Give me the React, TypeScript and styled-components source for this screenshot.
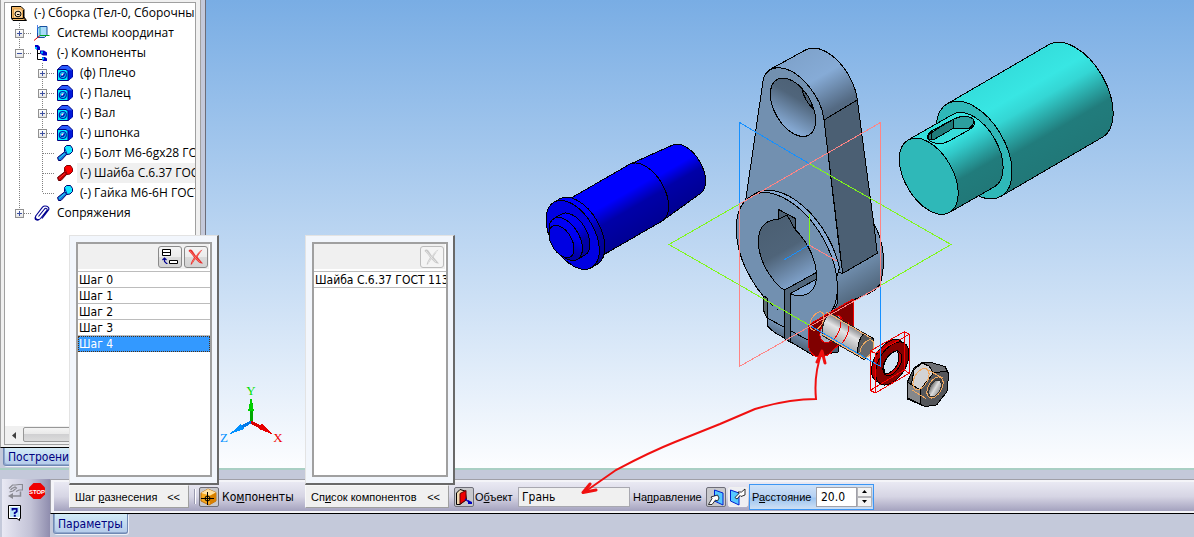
import React from 'react';
import styled, { createGlobalStyle, css } from 'styled-components';

const UI = '"Open Sans", "Noto Sans", sans-serif';
const LIST = '"DejaVu Sans Condensed", "DejaVu Sans", sans-serif';
const LABEL = '"Liberation Sans", Arial, sans-serif';

const Global = createGlobalStyle`
  *, *::before, *::after { box-sizing: border-box; }
  body { margin: 0; background: #c4c9da; overflow: hidden; font-family: ${UI}; font-size: 12px; color: #000; }
  button, input { font: inherit; color: inherit; margin: 0; }
`;

const Shell = styled.div`
  position: relative;
  display: flex;
  flex-direction: column;
  height: 100vh;
`;

const Workspace = styled.div`
  flex: 1;
  min-height: 0;
  display: flex;
  border-bottom: 2px solid #a9cfc4;
`;

/* ---------- model tree ---------- */

const Dock = styled.aside`
  flex: none;
  width: 206px;
  display: flex;
  flex-direction: column;
  background: #c4c9da;
  border-right: 1px solid #6c6c78;
`;

const DockFrame = styled.div`
  flex: 1;
  min-height: 0;
  display: flex;
  margin-right: 4px;
  padding: 2px 4px 2px 3px;
  background: #f0f0f0;
  border-left: 1px solid #a0a0a0;
  border-right: 1px solid #a0a0a0;
  border-bottom: 1px solid #000;
`;

const TreeBox = styled.div`
  flex: 1;
  min-width: 0;
  display: flex;
  flex-direction: column;
  background: #fff;
  border: 1px solid #a0a0a0;
`;

const TreeList = styled.ul`
  flex: 1;
  min-height: 0;
  overflow: hidden;
  margin: 0;
  padding: 0 0 0 3px;
  list-style: none;
`;

const TreeRow = styled.li`
  display: flex;
  align-items: center;
  height: 20px;
  white-space: nowrap;
`;

const dotsV = 'repeating-linear-gradient(to bottom, #808080 0 1px, transparent 1px 2px)';
const dotsH = 'repeating-linear-gradient(to right, #808080 0 1px, transparent 1px 2px)';

const Guide = styled.span<{ $up?: boolean; $down?: boolean; $right?: boolean }>`
  flex: none;
  width: 23px;
  height: 20px;
  display: flex;
  align-items: center;
  justify-content: center;
  background-repeat: no-repeat;
  background-image: ${dotsV}, ${dotsV}, ${dotsH};
  background-position: 11px 0, 11px 10px, 12px 10px;
  background-size: 1px ${p => (p.$up ? 10 : 0)}px, 1px ${p => (p.$down ? 10 : 0)}px, ${p => (p.$right ? 11 : 0)}px 1px;
`;

const Toggle = styled.button`
  width: 9px;
  height: 9px;
  padding: 0;
  display: flex;
  border: 1px solid #919191;
  background: linear-gradient(#fff, #e4e4e4);
`;

const IconCell = styled.span`
  flex: none;
  width: 23px;
  height: 20px;
  padding-right: 1px;
  display: flex;
  align-items: center;
  justify-content: center;
`;

const Caption = styled.span<{ $active?: boolean }>`
  flex: 1;
  height: 20px;
  padding-left: 3px;
  line-height: 20px;
  background: ${p => (p.$active ? '#f0f0f0' : 'transparent')};
`;

const ScrollBar = styled.div`
  flex: none;
  display: flex;
  height: 18px;
  background: #f0f0f0;
`;

const ScrollArrow = styled.button`
  width: 18px;
  padding: 0 0 2px;
  border: 0;
  background: none;
`;

const ScrollThumb = styled.div`
  width: 100px;
  height: 15px;
  margin-top: 1px;
  display: flex;
  align-items: center;
  justify-content: center;
  gap: 2px;
  border: 1px solid #979797;
  border-radius: 2px;
  background: linear-gradient(#f4f4f4, #e8e8e8 50%, #d0d0d2 50%, #dcdcdc);
`;

const Grip = styled.i`
  width: 1px;
  height: 7px;
  background: #555;
`;

const TabStrip = styled.div`
  flex: none;
  height: 20px;
  display: flex;
  padding-left: 3px;
`;

const Tab = styled.button`
  height: 18px;
  padding: 0 4px;
  border: 1px solid #7089b4;
  border-top: 0;
  border-radius: 0 0 3px 3px;
  box-shadow: inset 1px -1px 0 #8ea6cc, 1px 1px 0 #eceff6;
  background: linear-gradient(#d2eaf6, #b4cbea);
  color: #000080;
  font-family: ${LIST};
  font-size: 12px;
  line-height: 18px;
  text-align: left;
`;

/* ---------- viewport ---------- */

const Viewport = styled.main`
  flex: 1;
  min-width: 0;
  overflow: hidden;
  background: linear-gradient(#79ade4, #fcfdff);
`;

const Scene = styled.svg`
  display: block;
  width: 988px;
  height: 468px;
`;

const Markup = styled.svg`
  position: absolute;
  left: 0;
  top: 0;
  width: 1194px;
  height: 537px;
  pointer-events: none;
  z-index: 4;
`;

/* ---------- property panel ---------- */

const Panel = styled.footer`
  flex: none;
  display: flex;
  height: 67px;
  padding-top: 9px;
`;

const SideTools = styled.div`
  flex: none;
  width: 48px;
  margin-left: 2px;
  padding: 1px 0 0 3px;
  display: grid;
  grid-template-columns: 20px 20px;
  grid-auto-rows: 22px;
  column-gap: 2px;
  align-content: start;
  background: linear-gradient(to right, #e9e9f4, #c2c2d6 60%, #8f8dae);
`;

const SideButton = styled.button`
  padding: 0;
  border: 0;
  background: none;
  display: flex;
  align-items: center;
  justify-content: center;
`;

const PanelBody = styled.div`
  flex: 1;
  min-width: 0;
`;

const PropertyBar = styled.div`
  display: flex;
  align-items: center;
  height: 35px;
  padding-left: 18px;
  border-left: 1px solid #a0a0a8;
  border-top: 1px solid #a0a0a8;
  border-bottom: 1px solid #000;
  box-shadow: inset 3px 2px 0 #f4f4f8, inset 0 -2px 0 #f4f4f8;
  background: linear-gradient(#ececf5, #d6d5e4 50%, #9d9bb9);
`;

const DropField = styled.div<{ $width: number }>`
  position: relative;
  flex: none;
  width: ${p => p.$width}px;
  margin-right: 5px;
`;

const DropButton = styled.button`
  width: 100%;
  height: 23px;
  padding: 0 8px 0 5px;
  display: flex;
  align-items: center;
  justify-content: space-between;
  border: 1px solid #a0a0a0;
  border-top-color: #f8f8f8;
  border-left-color: #f8f8f8;
  background: #f0f0f0;
  font-family: ${LABEL};
  font-size: 11px;
  white-space: nowrap;
`;

const Popup = styled.section<{ $width: number }>`
  position: absolute;
  left: 0;
  bottom: 100%;
  z-index: 3;
  width: ${p => p.$width}px;
  height: 250px;
  padding: 6px 5px 6px 6px;
  display: flex;
  border: 1px solid #e3e3e3;
  border-right: 2px solid #696969;
  border-bottom: 2px solid #696969;
  background: #f2f6fc;
`;

const ListBox = styled.div`
  flex: 1;
  min-width: 0;
  display: flex;
  flex-direction: column;
  border: 2px solid #a0a0a0;
  background: #fff;
`;

const ListTools = styled.div`
  flex: none;
  height: 27px;
  padding: 2px 1px 0;
  display: flex;
  justify-content: flex-end;
  gap: 2px;
  border: 1px solid #fff;
  border-width: 0 1px 2px 0;
  background: #f0f0f0;
`;

const ToolButton = styled.button`
  width: 24px;
  height: 22px;
  padding: 0;
  display: flex;
  align-items: center;
  justify-content: center;
  border: 1px solid #8a8a8a;
  border-radius: 3px;
  background: linear-gradient(#f4f4f4, #ececec 50%, #dcdcdc 50%, #d2d2d2);
  &:disabled {
    border-color: #bcbcbc;
    background: #f4f4f4;
  }
`;

const Steps = styled.ul`
  margin: 0;
  padding: 0;
  list-style: none;
  border-top: 1px solid #bcbcbc;
`;

const Step = styled.li<{ $selected?: boolean }>`
  height: 16px;
  padding-left: 1px;
  overflow: hidden;
  white-space: nowrap;
  font-family: ${LIST};
  font-size: 12px;
  line-height: 16px;
  border-bottom: 1px solid #bcbcbc;
  ${p =>
    p.$selected &&
    css`
      color: #fff;
      background: #3399ff;
      border-bottom: 0;
      outline: 1px dotted #503010;
      outline-offset: -1px;
    `}
`;

const Divider = styled.span`
  flex: none;
  width: 2px;
  height: 15px;
  margin-right: 3px;
  background: linear-gradient(to right, #9a9ab0 50%, #fff 50%);
`;

const ModeButton = styled.button<{ $pressed?: boolean }>`
  flex: none;
  width: 20px;
  height: 20px;
  padding: 0;
  display: flex;
  align-items: center;
  justify-content: center;
  border: 1px solid ${p => (p.$pressed ? '#6e6e78' : '#f0f0f0')};
  border-radius: 2px;
  background: ${p => (p.$pressed ? '#c8c8cc' : '#eeeef2')};
  & + & { margin-left: 2px; }
`;

const FieldLabel = styled.label<{ $width: number; $inset?: number; $wide?: boolean }>`
  flex: none;
  width: ${p => p.$width}px;
  padding-left: ${p => p.$inset ?? 0}px;
  white-space: nowrap;
  font-family: ${p => (p.$wide ? LIST : LABEL)};
  font-size: ${p => (p.$wide ? 12 : 11)}px;
`;

const ObjectInput = styled.input`
  flex: none;
  width: 112px;
  height: 20px;
  padding: 0 3px;
  border: 1px solid #a8a8b0;
  border-radius: 0;
  background: #f0f0f0;
  font-family: ${LIST};
  font-size: 12px;
`;

const Distance = styled.div`
  flex: none;
  display: flex;
  align-items: center;
  height: 26px;
  margin-left: 1px;
  padding: 0 1px 0 2px;
  border: 1px solid #3c96f4;
  background: linear-gradient(#cfe2f8, #b4d0f2 50%, #9cc4f0 55%, #cfe0f4);
`;

const DistanceInput = styled.input`
  width: 41px;
  height: 20px;
  padding: 0 4px;
  border: 1px solid #a0a0a8;
  border-radius: 0;
  background: #fff;
  font-family: ${LIST};
  font-size: 12px;
`;

const Spin = styled.div`
  display: flex;
  flex-direction: column;
  width: 15px;
  height: 20px;
`;

const SpinButton = styled.button`
  flex: 1;
  padding: 0;
  display: flex;
  align-items: center;
  justify-content: center;
  border: 1px solid #b4b4b8;
  background: #f4f4f4;
`;

const BottomTabs = styled.div`
  display: flex;
  padding-left: 3px;
`;

const BottomTab = styled(Tab)`
  height: 20px;
`;

/* ---------- icons ---------- */

const Svg16 = ({ children, size = 16 }: { children: React.ReactNode; size?: number }) => (
  <svg width={size} height={size} viewBox="0 0 16 16" aria-hidden="true">{children}</svg>
);

const AssemblyIcon = () => (
  <Svg16>
    <path d="M.5 1.500h9.500l3 3v7.500l2.500 3.500H2l-1.500-2z" fill="#f5b968" stroke="#000" />
    <path d="M2.500 4h7l2 2v7h-9z" fill="#ffd9a0" stroke="#c88830" strokeWidth=".7" />
    <ellipse cx="7" cy="9" rx="3" ry="2.800" fill="#ffe8c8" stroke="#000" />
    <path d="M6 9.500h2.500" stroke="#000" />
    <path d="M1 13.500H12.500M12.500 5v8l2 2" fill="none" stroke="#000" />
  </Svg16>
);

const CoordIcon = () => (
  <Svg16>
    <path d="M3.500 3.500 6 1.500h7v8.500l-2.500 2.500H3.500z" fill="#a8dcf8" stroke="#1850a0" />
    <path d="M6 2v8" stroke="#20a0a0" />
    <path d="M6 10.500H15.500" stroke="#00a020" />
    <path d="M0 15.500 6 10.500" stroke="#e00000" />
    <path d="M3.500 0v8" stroke="#2060e0" strokeWidth=".8" />
  </Svg16>
);

const ComponentsIcon = () => (
  <Svg16>
    <path d="M3.500 5v9.500H8M3.500 8.500H6" fill="none" stroke="#000" />
    <path d="M1 0h3l2 2v3H3L1 3z" fill="#0000c8" /><path d="M1 2h2v2H1z" fill="#00c8ff" />
    <path d="M6 5.500h4l3 2v3H9l-3-2z" fill="#0000c8" /><path d="M7 6.500h2v2H7z" fill="#00c8ff" />
    <path d="M8 12h3l2 1.500V16H9l-1-1.500z" fill="#0000c8" /><path d="M8 12.500h2v2H8z" fill="#00c8ff" />
  </Svg16>
);

const PartIcon = () => (
  <Svg16>
    <path d="M.5 4.500 5 .5h6l4.500 4.500v7L11 15.500 10 5z" fill="#2a5cff" stroke="#000080" />
    <path d="M10.500 5 15.500 5.500V12L11 15.500z" fill="#0018d8" />
    <path d="M.5 4.500h8.500l2 2v9H.5z" fill="#00f0ff" stroke="#000080" />
    <circle cx="5.800" cy="10" r="3.500" fill="#00e0ff" stroke="#0018b0" strokeWidth="1.200" />
    <path d="M3.500 10.500A3 3 0 0 1 8 8.500 3 3 0 0 1 4 12z" fill="#0018b0" />
    <path d="M4.200 10A2 2 0 0 1 7 8.500L5 11z" fill="#fff" />
  </Svg16>
);

const BoltIcon = ({ red }: { red?: boolean }) => (
  <Svg16>
    <path d="M.5 12.500 8 6.500l2.500 2L4 15.500H1.500z" fill={red ? '#c80000' : '#1478d8'} stroke={red ? '#600000' : '#000070'} />
    <path d="M2 13.500 8.500 8" stroke={red ? '#ff3030' : '#20e0ff'} />
    <path d="M7.500 2.500 9.500.5h4l2 3v3l-2.500 2.500L10 9.500 7.500 6.500z" fill={red ? '#ff0000' : '#10e8ff'} stroke={red ? '#800000' : '#000070'} />
    <path d="M7.500 3 10 8.500" stroke={red ? '#a00000' : '#0030b0'} />
  </Svg16>
);

const ClipIcon = () => (
  <Svg16>
    <path d="M4.500 11.500 10.500 4c1.500-1.600 3.500 0 2.300 1.600L6.500 13.500c-2.300 2.600-6.600 0-4.400-3L8.500 2.200C10.500-.3 16 1.600 14.700 4.700L8 13.500M2 10.500 1 13c0 2.500 3 2.500 4 1.500" fill="none" stroke="#000090" strokeWidth="1.100" />
  </Svg16>
);

const StepsIcon = () => (
  <svg width="18" height="18" viewBox="0 0 18 18" aria-hidden="true">
    <path d="M1.500 1.500h8v6h-8zM1.500 4.500h8M8.500 12.500h8v3h-8z" fill="#fff" stroke="#000" />
    <path d="M3.500 10v3.500l2 2h1M1.500 12l2-2 2 2" fill="none" stroke="#000090" strokeWidth="1.200" />
  </svg>
);

const CrossIcon = ({ color, light }: { color: string; light: string }) => (
  <svg width="18" height="18" viewBox="0 0 18 18" aria-hidden="true">
    <path d="M1.500 3C3 .5 5 1.500 6 3.500l3 4.500C11 5 13 2.500 15.500 1.500c-1.500 2-3.500 4.500-5 7.500l5.500 6.500c-2.500.5-4.500-1-7.500-4.500-1.500 2-3 4.500-4.500 6-1-1.500 1.500-5 3-7.500C5.500 7.500 3.500 4.500 1.500 3z" fill={color} />
    <path d="M3 3c3 3 5 7 10 11M14 3C11 6 7 11 5 15" fill="none" stroke={light} strokeWidth=".8" />
  </svg>
);

const HandIcon = () => (
  <Svg16>
    <path d="M2 5.500 5.500 2h3L12 1.500h3.500V7H12L9 8.500M5 5.500l3-1.500 1.500 1L6 8l-3.500 1M3.500 7l2-2" fill="none" stroke="#8a8a92" strokeWidth="1.200" />
    <path d="M13.500 8.500v4.500H5" fill="none" stroke="#8a8a92" strokeWidth="1.500" />
    <path d="M1 13l5-3v6z" fill="#8a8a92" />
  </Svg16>
);

const StopIcon = () => (
  <svg width="18" height="18" viewBox="0 0 18 18" aria-hidden="true">
    <path d="M5.500 1h7L17 5.500v7L12.500 17h-7L1 12.500v-7z" fill="#f00000" />
    <text x="9" y="11.500" textAnchor="middle" fontFamily="Liberation Sans" fontWeight="700" fontSize="6" fill="#fff">STOP</text>
  </svg>
);

const HelpIcon = () => (
  <svg width="14" height="16" viewBox="0 0 14 16" aria-hidden="true">
    <path d="M.5 .5h12v13H11.500v2L9 13.500H.5z" fill="#fff" stroke="#000" />
    <path d="M2 2h9.500v10H2z" fill="#bfe6f8" />
    <path d="M4.500 5.500V3.900h4.200v2.600L6.700 8v1.200M5.800 10.800h2" fill="none" stroke="#000090" strokeWidth="1.800" />
  </svg>
);

const BoxIcon = () => (
  <svg width="18" height="18" viewBox="0 0 18 18" aria-hidden="true">
    <path d="M1 5 8 1l8 3.500v8.500L9 17 1 13z" fill="#f7a81c" stroke="#b06000" strokeWidth=".8" />
    <path d="M1 5 8 1l8 3.500-6 3z" fill="#ffe0a0" />
    <path d="M10 8 16 4.500V13l-6 3.500z" fill="#d88000" />
    <path d="M1 10.500h13M7.500 4v13" stroke="#000" />
    <circle cx="7.500" cy="10.500" r="2.500" fill="none" stroke="#000" />
  </svg>
);

const ObjectIcon = () => (
  <svg width="18" height="18" viewBox="0 0 18 18" aria-hidden="true">
    <path d="M1.500 5 5 1.500 10 3l1.500 8.500L5 16.500H1.500z" fill="#f0d8b0" stroke="#000" />
    <path d="M5 5.500 11 2.500V12l-6 4z" fill="#f00000" stroke="#600000" />
    <path d="M10 11 14 14" stroke="#0000c0" strokeWidth="1.200" />
    <path d="M13 12l4 2v2h-4z" fill="#0000c0" />
  </svg>
);

const DirectionIcon = ({ mirrored }: { mirrored?: boolean }) => (
  <svg width="18" height="18" viewBox="0 0 18 18" aria-hidden="true">
    {mirrored ? (
      <>
        <path d="M1.500 2 10 5v12L1.500 13z" fill="#55c8ff" stroke="#0020d0" />
        <path d="M6 9.500 10 5.500 9 4h3.500L16 1v6l-4 1.500-1-1L8 11z" fill="#fff" stroke="#000" strokeWidth=".8" />
      </>
    ) : (
      <>
        <path d="M7.500 2 16 5v12l-8.500-4z" fill="#55c8ff" stroke="#0020d0" />
        <path d="M1.500 16.500 5 10.500 4 9l6.500-2L12 10l-1.500 3-2-1-3.500 4.500z" fill="#fff" stroke="#000" strokeWidth=".8" />
      </>
    )}
  </svg>
);

/* ---------- 3D drawing ---------- */

type Disc = { x: number; y: number; r: number };

/* Outline of a turned body between two isometric circles whose axis rises to the right. */
const bodyPath = (a: Disc, b: Disc) => {
  const dx = 0.5, dy = 0.866, k = 0.577;
  return (
    `M${a.x - dx * a.r} ${a.y - dy * a.r}L${b.x - dx * b.r} ${b.y - dy * b.r}` +
    `A${b.r} ${b.r * k} 60 0 1 ${b.x + dx * b.r} ${b.y + dy * b.r}` +
    `L${a.x + dx * a.r} ${a.y + dy * a.r}` +
    `A${a.r} ${a.r * k} 60 0 1 ${a.x - dx * a.r} ${a.y - dy * a.r}Z`
  );
};

const Face = ({ d, fill = 'none', stroke = '#000', tilt = 60 }: { d: Disc; fill?: string; stroke?: string; tilt?: number }) => (
  <ellipse cx={d.x} cy={d.y} rx={d.r} ry={d.r * 0.577} transform={`rotate(${tilt} ${d.x} ${d.y})`} fill={fill} stroke={stroke} />
);

const Grad = ({ id, a, stops }: { id: string; a: Disc; stops: [number, string][] }) => (
  <linearGradient id={id} gradientUnits="userSpaceOnUse" x1={a.x - 0.5 * a.r} y1={a.y - 0.866 * a.r} x2={a.x + 0.5 * a.r} y2={a.y + 0.866 * a.r}>
    {stops.map(([o, c]) => <stop key={o} offset={o} stopColor={c} />)}
  </linearGradient>
);

const pinFlange = { x: 572.7, y: 234.9, r: 37.7 };
const pinFlangeBack = { x: 578.3, y: 231.6, r: 37.7 };
const pinMid = { x: 645.6, y: 192.8, r: 32.7 };
const pinEnd = { x: 685.9, y: 169.6, r: 28 };
const pinBase = { x: 573.3, y: 234.5, r: 23.6 };
const pinBoss = { x: 565.7, y: 239, r: 23.6 };
const pinTip = { x: 561.5, y: 241.5, r: 17.7 };

const Pin = () => (
  <g>
    <path d={bodyPath(pinMid, pinEnd)} fill="url(#blue2)" stroke="#000" />
    <path d={bodyPath({ ...pinFlangeBack, r: 32.7 }, pinMid)} fill="url(#blue)" stroke="#000" />
    <path d={bodyPath(pinFlange, pinFlangeBack)} fill="url(#blue)" stroke="#000" />
    <Face d={pinFlange} fill="#0000e2" />
    <path d={bodyPath(pinBoss, pinBase)} fill="url(#blue3)" stroke="#000" />
    <Face d={pinBoss} fill="url(#blue3)" />
    <Face d={pinTip} fill="#0000e2" />
  </g>
);

const shaftBig = { x: 974.2, y: 150, r: 53.5 };
const shaftEnd = { x: 1075.5, y: 91, r: 53.5 };
const shaftSmall = { x: 928.8, y: 176.2, r: 41.7 };
const shaftNeck = { x: 973.8, y: 150.5, r: 41.7 };

const Shaft = () => (
  <g>
    <path d={bodyPath(shaftBig, shaftEnd)} fill="url(#teal)" stroke="#000" />
    <Face d={shaftBig} fill="#2fb8b8" />
    <path d={bodyPath(shaftSmall, shaftNeck)} fill="url(#teal2)" stroke="#000" />
    <Face d={shaftSmall} fill="#2fb8b8" />
    <path d="M927.500 137.500C926.500 134.500 931 131 936 128.500L954 119C960 115.500 969 115.500 973 119C976.500 123.500 973.500 127.500 968 130.500L949 141C941 145.500 930 144 927.500 137.500Z" fill="#38dedb" stroke="#000" />
    <path d="M928 139.500V135.500C931 132 936 129.500 953 119.500V128.500L933 140Z" fill="#1f7a7a" stroke="#000" />
    <path d="M953 119.500C960 115.500 969 115.500 973 119C974.500 123 972.500 126 969 128.500H953.500Z" fill="#2c9f9f" stroke="#000" />
    <path d="M931.500 132.500V139.500" stroke="#000" />
  </g>
);

const Arm = () => (
  <g stroke="#000" strokeLinejoin="round">
    {/* hub body behind the front plate */}
    <path d="M780 189C805 186 830 205 840 232L873 222C886 244 885 268 880.500 283C877 291 866 295 853 300L838 322V352L815 356L767 326Z" fill="url(#hub)" />
    {/* upper boss and side wall */}
    <path d="M764 78Q767 70 774.500 67L804.900 50.300A43.400 25 60 0 1 857.300 100L873.500 224 877.300 253.300 842.700 273.300 824 120Z" fill="url(#boss)" />
    <path d="M824 120 857.300 100 873.500 222 877.300 253.300 842.700 273.300Z" fill="#4b5f73" />
    {/* front plate */}
    <path d="M745 205 763.300 79C766 70 772 67.500 779 67.700C800 69 822 98 824 120L838.300 240 842.700 273.300 790 262Z" fill="#7290b0" />
    {/* raised ring of the hub */}
    <path d="M755 193.600A71.500 41.250 60 0 1 839.500 268L837 276 786 258Z" fill="#86a8d0" />
    <path d="M764 296 763.300 310 767 318V325C771 332 778 334 784 338L791.700 342.500 814 356C820 345 828 320 838 302L836 275Z" fill="url(#clamp)" />
    <Face d={{ x: 786.8, y: 258, r: 71.5 }} fill="#7290b0" />
    <path d="M766 299C775 309 782 313 784.500 314V330L767 318Z" fill="#7290b0" stroke="none" />
    <path d="M791 290 834 270C836 285 838 300 831 310L809 325 808 339 791 331Z" fill="#7290b0" stroke="none" />
    <path d="M764 296 763.300 310 767 318V298Z" fill="#5c6c70" />
    <path d="M767 299V325M767 318 784 327M791 331 808 340" fill="none" />
    {/* upper bore */}
    <Face d={{ x: 793, y: 107.3, r: 32 }} fill="url(#bore1)" />
    <path d="M802 89.500C804 97 808 104 812.500 108C811 100 808 94 802 89.500Z" fill="#4b5f73" />
    {/* lower bore with keyway */}
    <path d="M758.300 241C758.500 226 767 219.500 778.300 219.300V209.300L795 218.300V229.300C808 242 817.500 262 816.500 279C815 292 806 297 795 295.500C774 289 758.500 262 758.300 241Z" fill="url(#bore2)" />
    <path d="M778.300 209.300 795 218.300V229.300L787 215 778.300 219.500Z" fill="#4b5f73" />
    {/* split */}
    <path d="M784.500 290 816.700 272.300V279L790.700 293.300V342.500L784.500 338.500Z" fill="#51667b" />
  </g>
);

const Fasteners = () => (
  <g strokeLinejoin="round">
    <path d="M808.300 325 853.300 299V325C852 334 842 342 833 350C828 358 816 359 811.500 353C809 350 808.300 347 808.300 343Z" fill="#800000" stroke="#f00000" />
    <path d="M820 336C819 327 828 316 838 315C846 318 842 330 836 337C830 344 822 345 820 336Z" fill="#a8b4c4" stroke="#e00000" />
    <path d="M830 314.500C835 313.500 838 318 843 321L872.500 338C875 342 871 355 864 359.500L823 336C821 328 824 318 830 314.500Z" fill="url(#bolt)" stroke="#222" />
    <path d="M864 333.500 873.500 338.500C875.500 344 870 356 863.500 359.500L857.500 355.500C857 348 859 338 864 333.500Z" fill="#55585c" stroke="#000" />
    <Face d={{ x: 867, y: 349, r: 10 }} tilt={-60} fill="#66696e" stroke="#e8a860" />
    <path d="M839 315C844 321 839 335 832 341M848 322C851 328 846 340 840 345" fill="none" stroke="#f00000" />
    <path d="M826 312 871 338M822 334 863 358" fill="none" stroke="#f8b070" />
    <Face d={{ x: 817, y: 321, r: 10 }} tilt={-60} stroke="#f8a060" />

    <Face d={{ x: 888.3, y: 361, r: 23.6 }} tilt={-60} fill="#b00000" />
    <Face d={{ x: 892.3, y: 363.5, r: 23.6 }} tilt={-60} fill="#850000" />
    <Face d={{ x: 892.3, y: 363.5, r: 13.3 }} tilt={-60} fill="#c40000" />
    <path d="M885.500 374C881 366 886 354 897 350.500C902 359 896 372 885.500 374Z" fill="#d3e5f7" stroke="#000" />
    <path d="M875.300 353.300 909.300 334.300V373.300L875.300 393ZM870.300 351 904.300 331.700V370L870.300 390.300ZM870.300 351 875.300 353.300M904.300 331.700 909.300 334.300M904.300 370 909.300 373.300M870.300 390.300 875.300 393" fill="none" stroke="#f00000" />

    <path d="M907.300 382 914 368 921.700 362.700 929 362 945 366.500 948.700 374 947 391.500 936.500 405 925 406.500 907.300 399Z" fill="#54565a" stroke="#000" />
    <path d="M907.300 382 920 390V404L907.300 398Z" fill="#85878a" stroke="#000" />
    <path d="M914 370 921.700 363 929 366 933.500 373 920 390 911.500 384Z" fill="#d2d2d4" stroke="#000" />
    <path d="M921.700 362.700 929 362 945 366.500 947 371 933.500 373 929 366Z" fill="#6e7074" stroke="#000" />
    <path d="M933.500 373 920 390V404" fill="none" stroke="#000" />
    <Face d={{ x: 935, y: 387.5, r: 11.5 }} tilt={-60} fill="#404246" stroke="#f0a860" />
    <Face d={{ x: 935, y: 388.5, r: 9 }} tilt={-60} fill="url(#nut)" stroke="#333" />
    <path d="M926 398.500 912 390M943 378 926 369" fill="none" stroke="#f0a860" />
    <Face d={{ x: 921, y: 379, r: 11.5 }} tilt={-60} stroke="#f0a860" />
  </g>
);

const Planes = () => (
  <g fill="none">
    <path d="M739.500 204V122.500L809 163.500M880.500 286V366.500L809 325M784 260 809 245" stroke="#1590ff" />
    <path d="M809 163.500 951 244.500 880.500 285.500M739.500 204 669 244.500 809 325M809.500 214V245" stroke="#80f818" />
    <path d="M739.500 204 880.500 122.500V286L739.500 366.500V204M809 245 837 261" stroke="#ff8484" />
  </g>
);

const Triad = () => (
  <g>
    <path d="M251 422V403" stroke="#00a800" strokeWidth="3" />
    <path d="M251 397 254 411H248Z" fill="#00d000" />
    <path d="M251 422 238 429" stroke="#0078e8" strokeWidth="3" />
    <path d="M229 434.500 241 424 244 429Z" fill="#0090ff" />
    <path d="M251 422 264 429" stroke="#d80000" strokeWidth="3" />
    <path d="M272.500 434.500 262 423.500 259 429Z" fill="#e80000" />
    <g fontFamily="Liberation Serif" fontSize="13" textAnchor="middle">
      <text x="251" y="395" fill="#00e000">Y</text>
      <text x="224" y="442" fill="#0090ff">Z</text>
      <text x="278" y="442" fill="#f00000">X</text>
    </g>
  </g>
);

/* ---------- data ---------- */

type Node = { text: string; level: number; icon: React.ReactNode; toggle?: '+' | '-'; last?: boolean; active?: boolean };

const nodes: Node[] = [
  { text: '(-) Сборка (Тел-0, Сборочны', level: 0, icon: <AssemblyIcon /> },
  { text: 'Системы координат', level: 1, icon: <CoordIcon />, toggle: '+' },
  { text: '(-) Компоненты', level: 1, icon: <ComponentsIcon />, toggle: '-' },
  { text: '(ф) Плечо', level: 2, icon: <PartIcon />, toggle: '+' },
  { text: '(-) Палец', level: 2, icon: <PartIcon />, toggle: '+' },
  { text: '(-) Вал', level: 2, icon: <PartIcon />, toggle: '+' },
  { text: '(-) шпонка', level: 2, icon: <PartIcon />, toggle: '+' },
  { text: '(-) Болт М6-6gх28 ГО', level: 2, icon: <BoltIcon /> },
  { text: '(-) Шайба С.6.37 ГОС', level: 2, icon: <BoltIcon red />, active: true },
  { text: '(-) Гайка М6-6Н ГОСТ', level: 2, icon: <BoltIcon />, last: true },
  { text: 'Сопряжения', level: 1, icon: <ClipIcon />, toggle: '+', last: true },
];

const steps = ['Шаг 0', 'Шаг 1', 'Шаг 2', 'Шаг 3', 'Шаг 4'];

const TreeNode = ({ node }: { node: Node }) => (
  <TreeRow>
    {node.level === 2 && <Guide $up $down />}
    {node.level > 0 && (
      <Guide $up $down={!node.last} $right>
        {node.toggle && (
          <Toggle aria-label={node.text}>
            <svg width="7" height="7" viewBox="0 0 7 7" aria-hidden="true">
              <path d={node.toggle === '+' ? 'M1 3.500h5M3.500 1v5' : 'M1 3.500h5'} stroke="#3c50a0" />
            </svg>
          </Toggle>
        )}
      </Guide>
    )}
    <IconCell>{node.icon}</IconCell>
    <Caption $active={node.active}>{node.text}</Caption>
  </TreeRow>
);

const SpinArrow = ({ down }: { down?: boolean }) => (
  <svg width="5" height="3" viewBox="0 0 5 3" aria-hidden="true">
    <path d={down ? 'M0 0h5L2.500 3z' : 'M0 3h5L2.500 0z'} fill="#000" />
  </svg>
);

export default function App() {
  return (
    <Shell>
      <Global />
      <Workspace>
        <Dock>
          <DockFrame>
            <TreeBox>
              <TreeList>{nodes.map(n => <TreeNode key={n.text} node={n} />)}</TreeList>
              <ScrollBar>
                <ScrollArrow aria-label="Влево">
                  <svg width="4" height="7" viewBox="0 0 4 7" aria-hidden="true"><path d="M4 0v7L0 3.500z" fill="#404040" /></svg>
                </ScrollArrow>
                <ScrollThumb><Grip /><Grip /><Grip /></ScrollThumb>
              </ScrollBar>
            </TreeBox>
          </DockFrame>
          <TabStrip><Tab>Построение</Tab></TabStrip>
        </Dock>
        <Viewport>
          <Scene viewBox="206 0 988 468" shapeRendering="crispEdges" aria-label="Сборка">
            <defs>
              <Grad id="blue" a={pinMid} stops={[[0, '#0000ff'], [0.35, '#0000ff'], [0.6, '#0000a8'], [1, '#000094']]} />
              <Grad id="blue2" a={pinEnd} stops={[[0, '#0000ff'], [0.35, '#0000ff'], [0.6, '#0000a8'], [1, '#000094']]} />
              <Grad id="blue3" a={pinBase} stops={[[0, '#0000ff'], [0.4, '#0000f0'], [0.7, '#0000a8'], [1, '#0000a0']]} />
              <Grad id="teal" a={shaftBig} stops={[[0, '#34dedc'], [0.25, '#38e6e3'], [0.4, '#34d6d4'], [0.72, '#217c7c'], [1, '#217878']]} />
              <Grad id="teal2" a={shaftSmall} stops={[[0, '#34dedc'], [0.25, '#38e6e3'], [0.4, '#31c8c8'], [0.72, '#217c7c'], [1, '#217878']]} />
              <Grad id="boss" a={{ x: 826, y: 88, r: 43 }} stops={[[0, '#7fa3cc'], [0.35, '#86abd6'], [0.75, '#546a83'], [1, '#4b5f73']]} />
              <linearGradient id="hub" gradientUnits="userSpaceOnUse" x1="842" y1="270" x2="862" y2="304">
                <stop offset="0" stopColor="#7290b0" /><stop offset="1" stopColor="#4b5f73" />
              </linearGradient>
              <linearGradient id="clamp" gradientUnits="userSpaceOnUse" x1="790" y1="322" x2="782" y2="342">
                <stop offset="0" stopColor="#82a4cc" /><stop offset="1" stopColor="#4b5f73" />
              </linearGradient>
              <Grad id="bore1" a={{ x: 793, y: 107, r: 32 }} stops={[[0, '#4b5f73'], [0.35, '#50657b'], [0.8, '#83a6cf'], [1, '#8bb0dc']]} />
              <Grad id="bore2" a={{ x: 787, y: 258, r: 41 }} stops={[[0, '#4b5f73'], [0.4, '#4f6479'], [0.8, '#7c9dc4'], [1, '#83a8d4']]} />
              <linearGradient id="bolt" gradientUnits="userSpaceOnUse" x1="852" y1="325" x2="840" y2="346">
                <stop offset="0" stopColor="#77797c" /><stop offset=".4" stopColor="#e4e4e6" /><stop offset="1" stopColor="#a0a2a4" />
              </linearGradient>
              <linearGradient id="nut" x1="0" y1="0" x2="0" y2="1">
                <stop offset="0" stopColor="#666" /><stop offset=".5" stopColor="#ddd" /><stop offset="1" stopColor="#999" />
              </linearGradient>
            </defs>
            <Pin />
            <Shaft />
            <Arm />
            <Fasteners />
            <Planes />
            <Triad />
          </Scene>
        </Viewport>
      </Workspace>

      <Panel>
        <SideTools>
          <SideButton aria-label="Создать"><HandIcon /></SideButton>
          <SideButton aria-label="Прервать"><StopIcon /></SideButton>
          <SideButton aria-label="Справка"><HelpIcon /></SideButton>
        </SideTools>
        <PanelBody>
          <PropertyBar>
            <DropField $width={120}>
              <Popup $width={150}>
                <ListBox>
                  <ListTools>
                    <ToolButton aria-label="Добавить шаг"><StepsIcon /></ToolButton>
                    <ToolButton aria-label="Удалить шаг"><CrossIcon color="#e83030" light="#ff8070" /></ToolButton>
                  </ListTools>
                  <Steps>{steps.map((s, i) => <Step key={s} $selected={i === 4}>{s}</Step>)}</Steps>
                </ListBox>
              </Popup>
              <DropButton><span>Шаг <u>р</u>азнесения</span><span>&lt;&lt;</span></DropButton>
            </DropField>
            <Divider />
            <ModeButton id="components" $pressed aria-label="Компоненты"><BoxIcon /></ModeButton>
            <FieldLabel htmlFor="components" $width={86} $inset={3} $wide>Ко<u>м</u>поненты</FieldLabel>
            <DropField $width={144}>
              <Popup $width={150}>
                <ListBox>
                  <ListTools>
                    <ToolButton aria-label="Удалить компонент" disabled><CrossIcon color="#c8c8c8" light="#e8e8e8" /></ToolButton>
                  </ListTools>
                  <Steps><Step>Шайба С.6.37 ГОСТ 113</Step></Steps>
                </ListBox>
              </Popup>
              <DropButton><span>Сп<u>и</u>сок компонентов</span><span>&lt;&lt;</span></DropButton>
            </DropField>
            <ModeButton $pressed aria-label="Выбор объекта"><ObjectIcon /></ModeButton>
            <FieldLabel htmlFor="object" $width={44} $inset={1}>О<u>б</u>ъект</FieldLabel>
            <ObjectInput id="object" defaultValue="Грань" />
            <FieldLabel htmlFor="direction" $width={76} $inset={3}>На<u>п</u>равление</FieldLabel>
            <ModeButton id="direction" $pressed aria-label="Прямое направление"><DirectionIcon /></ModeButton>
            <ModeButton aria-label="Обратное направление"><DirectionIcon mirrored /></ModeButton>
            <Distance>
              <FieldLabel htmlFor="distance" $width={64}>Р<u>а</u>сстояние</FieldLabel>
              <DistanceInput id="distance" defaultValue="20.0" />
              <Spin>
                <SpinButton aria-label="Больше"><SpinArrow /></SpinButton>
                <SpinButton aria-label="Меньше"><SpinArrow down /></SpinButton>
              </Spin>
            </Distance>
          </PropertyBar>
          <BottomTabs><BottomTab>Параметры</BottomTab></BottomTabs>
        </PanelBody>
      </Panel>

      <Markup viewBox="0 0 1194 537" aria-hidden="true">
        <path d="M822 352C817 365 814 378 816 399C795 399 775 403 755 409L720 424 675 442C650 452 635 460 616 470L586 491" fill="none" stroke="#f01010" strokeWidth="2" strokeLinecap="round" />
        <path d="M817 362 822 351 825 363M590 484 583 492.500 596 490" fill="none" stroke="#f01010" strokeWidth="3" strokeLinecap="round" strokeLinejoin="round" />
      </Markup>
    </Shell>
  );
}
